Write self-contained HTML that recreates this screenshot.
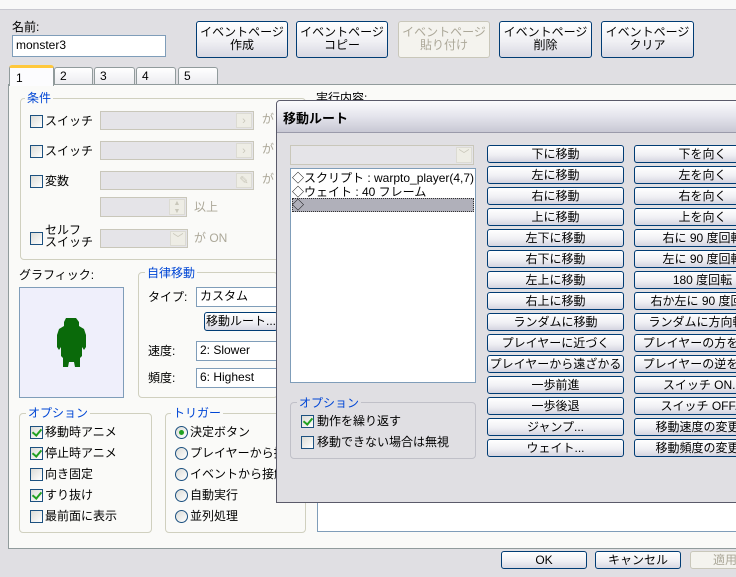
<!DOCTYPE html>
<html><head><meta charset="utf-8"><style>
*{box-sizing:border-box;margin:0;padding:0}
body{width:736px;height:577px;overflow:hidden;background:#e0dfe3;font-family:"Liberation Sans","Noto Sans CJK JP",sans-serif;font-size:12px;color:#000;position:relative}
.a{position:absolute}
.btn{position:absolute;border:1px solid #003c74;border-radius:3px;background:linear-gradient(#ffffff,#f0f0f4 55%,#d8d8e2);text-align:center;font-size:12px;line-height:13px;white-space:nowrap;overflow:hidden}
.dis{border-color:#c9c7ba;color:#aca899;background:#f4f3ee}
.inp{position:absolute;background:#fff;border:1px solid #7f9db9;padding:2px 3px;font-size:12px;line-height:15px}
.dinp{position:absolute;background:#e5e4e8;border:1px solid #c9c7ba}
.arr{position:absolute;right:1px;top:1px;bottom:1px;width:16px;background:#eeede5;border:1px solid #dcdbd3;color:#c9c7ba;font-size:11px;text-align:center;line-height:15px}
.grp{position:absolute;border:1px solid #d0d0bf;border-radius:4px}
.gl{position:absolute;color:#0046d5;background:inherit;padding:0 2px;font-size:12px;line-height:14px}
.cb{position:absolute;width:13px;height:13px;border:1px solid #1c5180;background:linear-gradient(135deg,#dcdcd7,#fff)}
.rb{position:absolute;width:13px;height:13px;border:1px solid #1c5180;border-radius:50%;background:linear-gradient(135deg,#dcdcd7,#fff)}
.lb{position:absolute;font-size:12px;line-height:14px;white-space:nowrap}
.ck::after{content:"";position:absolute;left:3px;top:0px;width:4px;height:7px;border:solid #21a121;border-width:0 2px 2px 0;transform:rotate(40deg)}
.mb{position:absolute;width:137px;height:18px;border:1px solid #003c74;border-radius:3px;background:linear-gradient(#ffffff,#f0f0f4 55%,#d4d4e0);text-align:center;font-size:12px;line-height:16px;white-space:nowrap;overflow:hidden}
</style></head><body>
<div class="a" style="left:0;top:0;width:736px;height:10px;background:#f8f8f8;border-bottom:1px solid #c8c8d0"></div>
<div class="lb" style="left:12px;top:20px">名前:</div>
<div class="inp" style="left:12px;top:35px;width:154px;height:22px">monster3</div>
<div class="btn" style="left:196px;top:21px;width:92px;height:37px;padding-top:4px">イベントページ<br>作成</div>
<div class="btn" style="left:296px;top:21px;width:92px;height:37px;padding-top:4px">イベントページ<br>コピー</div>
<div class="btn dis" style="left:398px;top:21px;width:92px;height:37px;padding-top:4px">イベントページ<br>貼り付け</div>
<div class="btn" style="left:499px;top:21px;width:93px;height:37px;padding-top:4px">イベントページ<br>削除</div>
<div class="btn" style="left:601px;top:21px;width:93px;height:37px;padding-top:4px">イベントページ<br>クリア</div>
<div class="a" style="left:8px;top:84px;width:740px;height:465px;background:#fafaf8;border:1px solid #919b9c"></div>
<div class="a" style="left:9px;top:65px;width:45px;height:21px;background:#fcfcfe;border:1px solid #919b9c;border-bottom:none;border-top:3px solid #ffc83c;border-radius:3px 3px 0 0;padding:3px 6px">1</div>
<div class="a" style="left:54px;top:67px;width:39px;height:17px;background:linear-gradient(#fff,#ececf0);border:1px solid #919b9c;border-bottom:none;border-radius:3px 3px 0 0;padding:1px 5px">2</div>
<div class="a" style="left:94px;top:67px;width:41px;height:17px;background:linear-gradient(#fff,#ececf0);border:1px solid #919b9c;border-bottom:none;border-radius:3px 3px 0 0;padding:1px 5px">3</div>
<div class="a" style="left:136px;top:67px;width:40px;height:17px;background:linear-gradient(#fff,#ececf0);border:1px solid #919b9c;border-bottom:none;border-radius:3px 3px 0 0;padding:1px 5px">4</div>
<div class="a" style="left:178px;top:67px;width:40px;height:17px;background:linear-gradient(#fff,#ececf0);border:1px solid #919b9c;border-bottom:none;border-radius:3px 3px 0 0;padding:1px 5px">5</div>
<div class="grp" style="left:20px;top:98px;width:286px;height:162px"></div>
<div class="gl" style="left:25px;top:91px;background:#fafaf8">条件</div>
<div class="cb" style="left:30px;top:115px"></div><div class="lb" style="left:45px;top:114px">スイッチ</div>
<div class="dinp" style="left:100px;top:111px;width:154px;height:19px"><div class="arr">›</div></div><div class="lb" style="left:262px;top:112px;color:#aca899">が</div>
<div class="cb" style="left:30px;top:145px"></div><div class="lb" style="left:45px;top:144px">スイッチ</div>
<div class="dinp" style="left:100px;top:141px;width:154px;height:19px"><div class="arr">›</div></div><div class="lb" style="left:262px;top:142px;color:#aca899">が</div>
<div class="cb" style="left:30px;top:175px"></div><div class="lb" style="left:45px;top:174px">変数</div>
<div class="dinp" style="left:100px;top:171px;width:154px;height:19px"><div class="arr">✎</div></div><div class="lb" style="left:262px;top:172px;color:#aca899">が</div>
<div class="dinp" style="left:100px;top:197px;width:87px;height:20px"><div class="arr" style="font-size:7px;line-height:8px">▲<br>▼</div></div><div class="lb" style="left:194px;top:200px;color:#aca899">以上</div>
<div class="cb" style="left:30px;top:232px"></div><div class="lb" style="left:45px;top:224px;line-height:12px">セルフ<br>スイッチ</div>
<div class="dinp" style="left:100px;top:229px;width:88px;height:19px"><div class="arr">﹀</div></div><div class="lb" style="left:194px;top:231px;color:#aca899">が ON</div>
<div class="lb" style="left:19px;top:268px">グラフィック:</div>
<div class="a" style="left:19px;top:287px;width:105px;height:111px;background:#efeffb;border:1px solid #7f9db9"></div>
<svg class="a" style="left:54px;top:318px" width="35" height="50" viewBox="0 0 35 50"><path fill="#0a6a0a" d="M12 0h10l3 4v4l5 3 2 6v12l-2 3-2-3v9l-2 2v9h-5l-1-5h-5l-1 5h-5v-9l-2-2v-9l-2 3-2-3V17l2-6 5-3V4z"/></svg>
<div class="grp" style="left:138px;top:272px;width:140px;height:126px"></div>
<div class="gl" style="left:145px;top:266px;background:#fafaf8">自律移動</div>
<div class="lb" style="left:148px;top:290px">タイプ:</div>
<div class="inp" style="left:196px;top:287px;width:82px;height:20px;padding:1px 3px">カスタム</div>
<div class="btn" style="left:204px;top:312px;width:74px;height:19px;line-height:16px">移動ルート...</div>
<div class="lb" style="left:148px;top:344px">速度:</div>
<div class="inp" style="left:196px;top:341px;width:82px;height:20px;padding:1px 3px">2: Slower</div>
<div class="lb" style="left:148px;top:371px">頻度:</div>
<div class="inp" style="left:196px;top:368px;width:82px;height:20px;padding:1px 3px">6: Highest</div>
<div class="grp" style="left:19px;top:413px;width:133px;height:120px"></div>
<div class="gl" style="left:26px;top:406px;background:#fafaf8">オプション</div>
<div class="cb ck" style="left:30px;top:426px"></div><div class="lb" style="left:45px;top:425px">移動時アニメ</div>
<div class="cb ck" style="left:30px;top:447px"></div><div class="lb" style="left:45px;top:446px">停止時アニメ</div>
<div class="cb" style="left:30px;top:468px"></div><div class="lb" style="left:45px;top:467px">向き固定</div>
<div class="cb ck" style="left:30px;top:489px"></div><div class="lb" style="left:45px;top:488px">すり抜け</div>
<div class="cb" style="left:30px;top:510px"></div><div class="lb" style="left:45px;top:509px">最前面に表示</div>
<div class="grp" style="left:165px;top:413px;width:141px;height:120px"></div>
<div class="gl" style="left:171px;top:406px;background:#fafaf8">トリガー</div>
<div class="rb" style="left:175px;top:426px"><div style="position:absolute;left:3px;top:3px;width:5px;height:5px;border-radius:50%;background:#21a121"></div></div><div class="lb" style="left:190px;top:425px">決定ボタン</div>
<div class="rb" style="left:175px;top:447px"></div><div class="lb" style="left:190px;top:446px">プレイヤーから接触</div>
<div class="rb" style="left:175px;top:468px"></div><div class="lb" style="left:190px;top:467px">イベントから接触</div>
<div class="rb" style="left:175px;top:489px"></div><div class="lb" style="left:190px;top:488px">自動実行</div>
<div class="rb" style="left:175px;top:510px"></div><div class="lb" style="left:190px;top:509px">並列処理</div>
<div class="lb" style="left:316px;top:91px">実行内容:</div>
<div class="a" style="left:317px;top:490px;width:430px;height:42px;background:#fff;border:1px solid #7f9db9"></div>
<div class="btn" style="left:501px;top:551px;width:86px;height:18px;line-height:16px">OK</div>
<div class="btn" style="left:595px;top:551px;width:86px;height:18px;line-height:16px">キャンセル</div>
<div class="btn dis" style="left:690px;top:551px;width:86px;height:18px;line-height:16px;text-align:left;padding-left:22px">適用</div>
<div class="a" style="left:276px;top:100px;width:470px;height:403px;background:#e0dfe3;border:1px solid #5a5a6a;border-radius:4px 4px 0 0"></div>
<div class="a" style="left:277px;top:101px;width:470px;height:32px;background:linear-gradient(#fbfbfd,#e4e4ec 50%,#c8c8d4);border-bottom:1px solid #9a9aaa;border-radius:3px 3px 0 0"></div>
<div class="lb" style="left:283px;top:112px;font-weight:bold;font-size:13px">移動ルート</div>
<div class="dinp" style="left:290px;top:145px;width:184px;height:20px"><div class="arr">﹀</div></div>
<div class="a" style="left:290px;top:168px;width:186px;height:215px;background:#fff;border:1px solid #7f9db9"></div>
<div class="lb" style="left:292px;top:171px">◇スクリプト : warpto_player(4,7)</div>
<div class="lb" style="left:292px;top:185px">◇ウェイト : 40 フレーム</div>
<div class="a" style="left:292px;top:198px;width:182px;height:14px;background:#b0b0ba;border:1px dotted #333"></div>
<div class="lb" style="left:292px;top:198px">◇</div>
<div class="grp" style="left:290px;top:402px;width:186px;height:57px;border-color:#c0c0c8"></div>
<div class="gl" style="left:297px;top:396px;background:#e0dfe3">オプション</div>
<div class="cb ck" style="left:301px;top:415px"></div><div class="lb" style="left:317px;top:414px">動作を繰り返す</div>
<div class="cb" style="left:301px;top:436px"></div><div class="lb" style="left:317px;top:435px">移動できない場合は無視</div>
<div class="mb" style="left:487px;top:145px">下に移動</div><div class="mb" style="left:634px;top:145px">下を向く</div>
<div class="mb" style="left:487px;top:166px">左に移動</div><div class="mb" style="left:634px;top:166px">左を向く</div>
<div class="mb" style="left:487px;top:187px">右に移動</div><div class="mb" style="left:634px;top:187px">右を向く</div>
<div class="mb" style="left:487px;top:208px">上に移動</div><div class="mb" style="left:634px;top:208px">上を向く</div>
<div class="mb" style="left:487px;top:229px">左下に移動</div><div class="mb" style="left:634px;top:229px">右に 90 度回転</div>
<div class="mb" style="left:487px;top:250px">右下に移動</div><div class="mb" style="left:634px;top:250px">左に 90 度回転</div>
<div class="mb" style="left:487px;top:271px">左上に移動</div><div class="mb" style="left:634px;top:271px">180 度回転</div>
<div class="mb" style="left:487px;top:292px">右上に移動</div><div class="mb" style="left:634px;top:292px">右か左に 90 度回転</div>
<div class="mb" style="left:487px;top:313px">ランダムに移動</div><div class="mb" style="left:634px;top:313px">ランダムに方向転換</div>
<div class="mb" style="left:487px;top:334px">プレイヤーに近づく</div><div class="mb" style="left:634px;top:334px">プレイヤーの方を向く</div>
<div class="mb" style="left:487px;top:355px">プレイヤーから遠ざかる</div><div class="mb" style="left:634px;top:355px">プレイヤーの逆を向く</div>
<div class="mb" style="left:487px;top:376px">一歩前進</div><div class="mb" style="left:634px;top:376px">スイッチ ON...</div>
<div class="mb" style="left:487px;top:397px">一歩後退</div><div class="mb" style="left:634px;top:397px">スイッチ OFF...</div>
<div class="mb" style="left:487px;top:418px">ジャンプ...</div><div class="mb" style="left:634px;top:418px">移動速度の変更...</div>
<div class="mb" style="left:487px;top:439px">ウェイト...</div><div class="mb" style="left:634px;top:439px">移動頻度の変更...</div>
</body></html>
